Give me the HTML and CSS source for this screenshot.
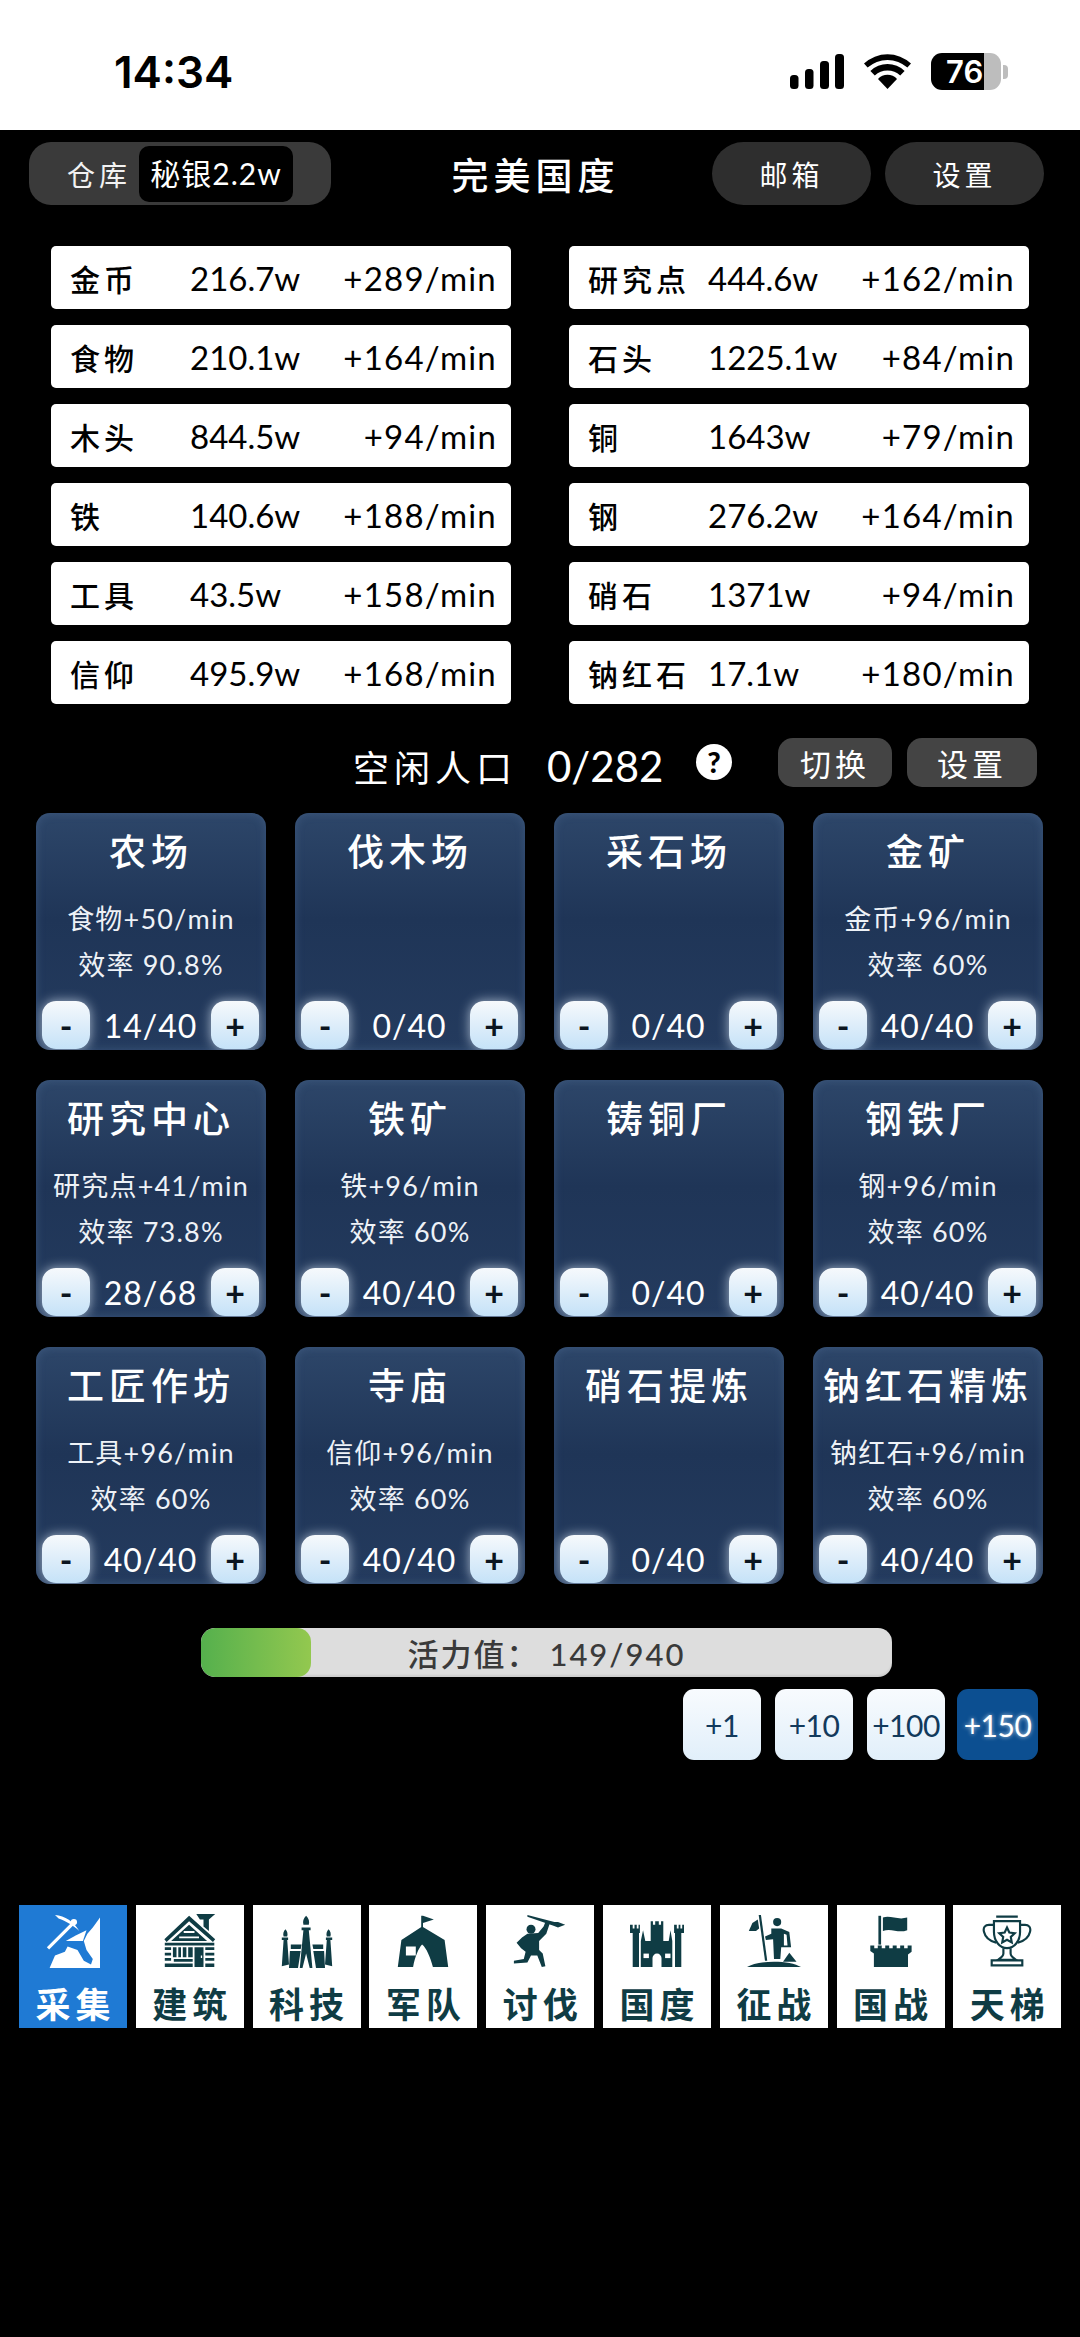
FILE: index.html
```html
<!DOCTYPE html>
<html lang="zh-CN">
<head>
    <meta charset="UTF-8">
    <meta name="viewport" content="width=device-width, initial-scale=1.0">
    <title>完美国度</title>
    <link rel="stylesheet" href="styles.css">
</head>
<body>
<header class="status-bar">
    <span class="clock">14:34</span>
    <div class="status-icons">
        <svg class="signal" viewBox="0 0 54 35" aria-hidden="true">
            <rect x="0" y="21" width="8.5" height="14" rx="3.5"/>
            <rect x="15" y="15" width="8.5" height="20" rx="3.5"/>
            <rect x="30" y="7" width="9" height="28" rx="3.5"/>
            <rect x="45" y="0" width="9" height="35" rx="3.5"/>
        </svg>
        <svg class="wifi" viewBox="0 0 47 35" aria-hidden="true">
            <path d="M23.5 35 14 25a13 13 0 0 1 19 0Z"/>
            <path d="M10.8 21.6 6.4 17a24.5 24.5 0 0 1 34.2 0l-4.4 4.6a18.5 18.5 0 0 0-25.4 0Z"/>
            <path d="M3.6 13.6 0 9.6a34.5 34.5 0 0 1 47 0l-3.6 4a29.5 29.5 0 0 0-39.8 0Z"/>
        </svg>
        <div class="battery"><span class="battery-level">76</span><i class="battery-cap"></i></div>
    </div>
</header>

<main class="game">
    <div class="top-bar">
        <div class="store"><span class="store-label">仓库</span><span class="store-value">秘银2.2w</span></div>
        <h1 class="realm">完美国度</h1>
        <div class="top-actions">
            <button class="pill">邮箱</button>
            <button class="pill">设置</button>
        </div>
    </div>

    <section class="resources">
        <div class="res"><b>金币</b><span>216.7w</span><em>+289/min</em></div>
        <div class="res"><b>研究点</b><span>444.6w</span><em>+162/min</em></div>
        <div class="res"><b>食物</b><span>210.1w</span><em>+164/min</em></div>
        <div class="res"><b>石头</b><span>1225.1w</span><em>+84/min</em></div>
        <div class="res"><b>木头</b><span>844.5w</span><em>+94/min</em></div>
        <div class="res"><b>铜</b><span>1643w</span><em>+79/min</em></div>
        <div class="res"><b>铁</b><span>140.6w</span><em>+188/min</em></div>
        <div class="res"><b>钢</b><span>276.2w</span><em>+164/min</em></div>
        <div class="res"><b>工具</b><span>43.5w</span><em>+158/min</em></div>
        <div class="res"><b>硝石</b><span>1371w</span><em>+94/min</em></div>
        <div class="res"><b>信仰</b><span>495.9w</span><em>+168/min</em></div>
        <div class="res"><b>钠红石</b><span>17.1w</span><em>+180/min</em></div>
    </section>

    <div class="population">
        <span class="pop-label">空闲人口</span>
        <span class="pop-value">0/282</span>
        <span class="help">?</span>
        <button class="small-btn switch">切换</button>
        <button class="small-btn conf">设置</button>
    </div>

    <section class="buildings">
        <div class="card">
            <h2>农场</h2>
            <div class="card-info"><p>食物+50/min</p><p>效率 90.8%</p></div>
            <div class="stepper"><button>-</button><span>14/40</span><button>+</button></div>
        </div>
        <div class="card">
            <h2>伐木场</h2>
            <div class="card-info"></div>
            <div class="stepper"><button>-</button><span>0/40</span><button>+</button></div>
        </div>
        <div class="card">
            <h2>采石场</h2>
            <div class="card-info"></div>
            <div class="stepper"><button>-</button><span>0/40</span><button>+</button></div>
        </div>
        <div class="card">
            <h2>金矿</h2>
            <div class="card-info"><p>金币+96/min</p><p>效率 60%</p></div>
            <div class="stepper"><button>-</button><span>40/40</span><button>+</button></div>
        </div>
        <div class="card">
            <h2>研究中心</h2>
            <div class="card-info"><p>研究点+41/min</p><p>效率 73.8%</p></div>
            <div class="stepper"><button>-</button><span>28/68</span><button>+</button></div>
        </div>
        <div class="card">
            <h2>铁矿</h2>
            <div class="card-info"><p>铁+96/min</p><p>效率 60%</p></div>
            <div class="stepper"><button>-</button><span>40/40</span><button>+</button></div>
        </div>
        <div class="card">
            <h2>铸铜厂</h2>
            <div class="card-info"></div>
            <div class="stepper"><button>-</button><span>0/40</span><button>+</button></div>
        </div>
        <div class="card">
            <h2>钢铁厂</h2>
            <div class="card-info"><p>钢+96/min</p><p>效率 60%</p></div>
            <div class="stepper"><button>-</button><span>40/40</span><button>+</button></div>
        </div>
        <div class="card">
            <h2>工匠作坊</h2>
            <div class="card-info"><p>工具+96/min</p><p>效率 60%</p></div>
            <div class="stepper"><button>-</button><span>40/40</span><button>+</button></div>
        </div>
        <div class="card">
            <h2>寺庙</h2>
            <div class="card-info"><p>信仰+96/min</p><p>效率 60%</p></div>
            <div class="stepper"><button>-</button><span>40/40</span><button>+</button></div>
        </div>
        <div class="card">
            <h2>硝石提炼</h2>
            <div class="card-info"></div>
            <div class="stepper"><button>-</button><span>0/40</span><button>+</button></div>
        </div>
        <div class="card">
            <h2>钠红石精炼</h2>
            <div class="card-info"><p>钠红石+96/min</p><p>效率 60%</p></div>
            <div class="stepper"><button>-</button><span>40/40</span><button>+</button></div>
        </div>
    </section>

    <div class="energy">
        <div class="energy-fill" style="width: 15.9%"></div>
        <span class="energy-text">活力值： 149/940</span>
    </div>
    <div class="boosts">
        <button class="boost">+1</button>
        <button class="boost">+10</button>
        <button class="boost">+100</button>
        <button class="boost boost-on">+150</button>
    </div>

    <nav class="tabs">
        <a class="tab tab-on">
            <svg viewBox="0 0 60 60" aria-hidden="true">
                <path d="M1 37 31 7l2.5 2.5-30 30Z"/>
                <path d="M10 1c11 1 21 7 27 18-6-6-15-11-23-14Z"/>
                <circle cx="31" cy="9" r="3.5"/>
                <path d="M33 24 45 18l-4 12H22Z"/>
                <path d="M60 4V60H4L10 46l11-4 3-6 11 4 7 12 8 4 2-6-7-10-3-10 4-8 6-7Z"/>
            </svg>
            <span>采集</span>
        </a>
        <a class="tab">
            <svg viewBox="0 0 60 60" aria-hidden="true">
                <path d="M37 0H58L51 6V19L45 14V6H41Z"/>
                <path d="M29 2 58 28l-2.5 3L29 8 4 31l-2.5-3Z"/>
                <path d="M29 12 49 30H9ZM18 25v2h22v-2ZM23 19v2h12v-2Z" fill-rule="evenodd"/>
                <path d="M2 32H57v3H2ZM2 37H9v3H2ZM2 43H9v3H2ZM2 49H9v3H2ZM2 55H33v4H2ZM47 37H57v3H47ZM47 43H57v3H47ZM47 49H57v3H47ZM47 55H57v4H47ZM12 50H33v3H12ZM28 37H33v11H28Z"/>
                <path d="M11 37H15V48H11ZM17 37H20V48H17ZM22 37H26V48H22Z"/>
                <path d="M35 37H45V59H35ZM42 46v3h1.500v-3Z" fill-rule="evenodd"/>
            </svg>
            <span>建筑</span>
        </a>
        <a class="tab">
            <svg viewBox="0 0 60 60" aria-hidden="true">
                <path d="M29 2c3 3 4 6 3 10h-6c-1-4 0-7 3-10Z"/>
                <path d="M24 15H34V18H32L36 60H33L29 44 25 60H22L26 18H24Z"/>
                <path d="M6 17c2 2 3 5 2 8H4c-1-3 0-6 2-8ZM54 17c2 2 3 5 2 8h-4c-1-3 0-6 2-8Z"/>
                <path d="M2 26H9V29H8L10 56 2 58 4 29H2ZM51 26H58V29H56L58 58 50 56 52 29H51Z"/>
                <path d="M12 34H24L23 39H12ZM36 34H48V39H37ZM11 41H23L20 60H10ZM37 41H49L50 60H40Z"/>
            </svg>
            <span>科技</span>
        </a>
        <a class="tab">
            <svg viewBox="0 0 60 60" aria-hidden="true">
                <path d="M28 2h2v13h-2Z"/>
                <path d="M30 2 42 6 30 10Z"/>
                <path d="M29 14 54 29 58 59H41C38 48 34 38 29 34 25 38 21 48 19 59H2L6 29ZM11 36V46H22V36Z" fill-rule="evenodd"/>
            </svg>
            <span>军队</span>
        </a>
        <a class="tab">
            <svg viewBox="0 0 60 60" aria-hidden="true">
                <path d="M16 1 46 9 50 9 58 12 50 15 45 13 16 3Z"/>
                <circle cx="20" cy="17" r="5"/>
                <path d="M16 22 28 21 34 14 36 9 41 10 37 22 29 30 29 40 33 44 36 58 32 59 27 46 20 46 16 54 1 55V52L12 50 14 42 9 38 4 32 10 26Z"/>
            </svg>
            <span>讨伐</span>
        </a>
        <a class="tab">
            <svg viewBox="0 0 60 60" aria-hidden="true">
                <path d="M0 12h3v4h2v-4h2.500v4h2v-4H11v9H10V59H3V21H0Z"/>
                <path d="M49 12h3v4h2v-4h2v4h2v-4h2v9h-3V59H50V21H49Z"/>
                <path d="M23 8h2.500v4H28V8h4v4h2.500V8H37V30h6L45 18l2 12V59H35V49a5 5 0 0 0-10 0V59H12V30L14.500 18 17 30h6Z"/>
                <rect class="cut" x="15" y="44" width="6" height="5"/>
                <rect class="cut" x="39" y="44" width="6" height="5"/>
            </svg>
            <span>国度</span>
        </a>
        <a class="tab">
            <svg viewBox="0 0 60 60" aria-hidden="true">
                <path d="M13 1h2.500l7 51H20Z"/>
                <path d="M12 6 6 10 2 19l8 0 3.500-3Z"/>
                <circle cx="33.500" cy="9" r="4.500"/>
                <path d="M27 16H38L47 20 49 37H38L37 50H30L29 28 21 29 20 25 27 22ZM41 22V35H45L44 23Z" fill-rule="evenodd"/>
                <path d="M47 43 55 53H40Z"/>
                <path d="M0 59C6 55 18 53 30 53s24 2 30 6Z"/>
            </svg>
            <span>征战</span>
        </a>
        <a class="tab">
            <svg viewBox="0 0 60 60" aria-hidden="true">
                <path d="M16 2h3V34H16Z"/>
                <path d="M21 4c8-3 16 3 27 0V18C38 22 30 15 21 19Z"/>
                <path d="M7 35h4.400v3h3.900v-3h4.400v3h3.900v-3h4.400v3h3.900v-3h4.400v3h3.900v-3h4.400v3h3.900v-3h4.400v7l-4 3V59H11V44L7 41Z"/>
            </svg>
            <span>国战</span>
        </a>
        <a class="tab">
            <svg class="cup" viewBox="0 0 60 60" aria-hidden="true">
                <path d="M18 3H42M15.500 8H44.500V20C44.500 30 38 38 30 38S15.500 30 15.500 20Z"/>
                <path d="M15.500 12H10C6 12 3 15 4.500 20 6 27 11 30 18 32M44.500 12H50C54 12 57 15 55.500 20 54 27 49 30 42 32"/>
                <path d="M26 38V44C26 47 23 49 20 51H40C37 49 34 47 34 44V38"/>
                <path d="M13 51.500H47V57H13Z"/>
                <path d="m30 15 2.600 5.500 6 .8-4.400 4.200 1.100 6L30 28.600l-5.300 2.900 1.100-6-4.400-4.200 6-.8Z"/>
            </svg>
            <span>天梯</span>
        </a>
    </nav>
</main>
</body>
</html>
```

FILE: styles.css
```css
* {
    box-sizing: border-box;
}

body {
    margin: 0;
    width: 1080px;
    height: 2337px;
    background: #000000;
    color: #FFFFFF;
    font-family: "Lato", "Noto Sans CJK SC", sans-serif;
    overflow: hidden;
}

button {
    font-family: inherit;
    border: none;
    padding: 0;
}

/* status bar */
.status-bar {
    height: 130px;
    background: #FFFFFF;
    color: #000000;
    display: flex;
    justify-content: space-between;
    align-items: center;
    padding: 13px 72px 0 114px;
}

.clock {
    font-family: "Inter", sans-serif;
    font-size: 44px;
    font-weight: 600;
}

.status-icons {
    display: flex;
    align-items: center;
    gap: 20px;
}

.signal {
    width: 54px;
    height: 35px;
}

.wifi {
    width: 47px;
    height: 35px;
}

.battery {
    display: flex;
    align-items: center;
    gap: 2px;
}

.battery-level {
    width: 70px;
    height: 37px;
    border-radius: 11px;
    background: linear-gradient(90deg, #000000 76%, #BDBDBD 76%);
    color: #FFFFFF;
    font-family: "Inter", sans-serif;
    font-size: 31px;
    font-weight: 600;
    line-height: 37px;
    padding-left: 15px;
}

.battery-cap {
    width: 5px;
    height: 14px;
    background: #BDBDBD;
    border-radius: 0 4px 4px 0;
}

/* top bar */
.top-bar {
    display: flex;
    align-items: center;
    height: 63px;
    margin-top: 12px;
    padding: 0 36px 0 29px;
}

.store {
    width: 302px;
    height: 63px;
    background: #3A3A3A;
    border-radius: 22px;
    display: flex;
    align-items: center;
    padding: 5px 38px 5px 38px;
    justify-content: space-between;
}

.store-label {
    font-size: 28px;
    letter-spacing: 4px;
    color: #F2F2F2;
}

.store-value {
    background: #000000;
    border-radius: 10px;
    width: 154px;
    height: 56px;
    font-size: 30px;
    line-height: 54px;
    letter-spacing: 1px;
    text-align: center;
    white-space: nowrap;
}

.realm {
    flex: 1;
    margin: 0;
    padding-left: 28px;
    font-size: 37px;
    font-weight: 500;
    letter-spacing: 5px;
    text-align: center;
}

.top-actions {
    display: flex;
    gap: 14px;
}

.pill {
    width: 159px;
    height: 63px;
    border-radius: 32px;
    background: #2E2E2E;
    color: #FFFFFF;
    font-size: 28px;
    letter-spacing: 4px;
}

/* resources */
.resources {
    display: grid;
    grid-template-columns: 460px 460px;
    column-gap: 58px;
    row-gap: 16px;
    padding-left: 51px;
    margin-top: 41px;
}

.res {
    height: 63px;
    background: #FFFFFF;
    color: #000000;
    border-radius: 5px;
    display: grid;
    grid-template-columns: 120px 1fr auto;
    align-items: center;
    padding: 0 14px 0 19px;
    font-size: 33px;
}

.res b {
    font-size: 30px;
    font-weight: 500;
    letter-spacing: 4px;
    white-space: nowrap;
}

.res em {
    font-style: normal;
    letter-spacing: 1.2px;
}

/* population */
.population {
    display: flex;
    align-items: center;
    height: 49px;
    margin-top: 34px;
    padding-left: 353px;
}

.pop-label {
    width: 194px;
    font-size: 36px;
    letter-spacing: 5px;
    padding-top: 6px;
}

.pop-value {
    width: 149px;
    font-size: 42px;
    padding-top: 6px;
}

.help {
    width: 36px;
    height: 36px;
    margin-top: -2px;
    border-radius: 50%;
    background: #FFFFFF;
    color: #000000;
    font-size: 29px;
    font-weight: 900;
    line-height: 36px;
    text-align: center;
}

.small-btn {
    height: 49px;
    background: #444444;
    border-radius: 15px;
    color: #FFFFFF;
    font-size: 31px;
    letter-spacing: 4px;
}

.switch {
    width: 114px;
    margin-left: 46px;
}

.conf {
    width: 130px;
    margin-left: 15px;
}

/* building cards */
.buildings {
    display: grid;
    grid-template-columns: repeat(4, 230px);
    column-gap: 29px;
    row-gap: 30px;
    padding-left: 36px;
    margin-top: 26px;
}

.card {
    height: 237px;
    border-radius: 14px;
    background: linear-gradient(180deg, #2D4669 0%, #1F3557 45%, #243B5E 100%);
    box-shadow: inset 0 0 10px rgba(90, 120, 160, 0.4);
    display: flex;
    flex-direction: column;
    text-align: center;
    overflow: hidden;
}

.card h2 {
    margin: 16px 0 0;
    height: 46px;
    font-size: 37px;
    font-weight: 500;
    line-height: 46px;
    letter-spacing: 5px;
    white-space: nowrap;
}

.card-info {
    flex: 1;
    padding-top: 29px;
}

.card-info p {
    margin: 0 0 17px;
    height: 29px;
    font-size: 27px;
    line-height: 29px;
    letter-spacing: 1.2px;
    color: #EEF2F7;
    white-space: nowrap;
}

.stepper {
    display: flex;
    justify-content: space-between;
    align-items: center;
    padding: 0 7px 1px 6px;
    font-size: 32px;
}

.stepper span {
    letter-spacing: 1px;
}

.stepper button {
    width: 48px;
    height: 48px;
    border-radius: 14px;
    background: linear-gradient(180deg, #F6F9FC 0%, #C5E2F8 100%);
    box-shadow: 0 0 12px rgba(225, 238, 252, 0.7);
    color: #0B1520;
    font-size: 34px;
    font-weight: 700;
}

/* energy */
.energy {
    position: relative;
    width: 691px;
    height: 49px;
    margin: 44px 0 0 201px;
    background: #DDDDDD;
    border-radius: 14px;
    overflow: hidden;
    text-align: center;
    box-shadow: inset 0 -2px 2px rgba(0, 0, 0, 0.08);
}

.energy-fill {
    position: absolute;
    left: 0;
    top: 0;
    height: 100%;
    background: linear-gradient(90deg, #55B04D, #93C84F);
    border-radius: 14px;
}

.energy-text {
    position: relative;
    color: #3A3A3A;
    font-size: 31px;
    font-weight: 500;
    line-height: 53px;
    letter-spacing: 2px;
}

.boosts {
    display: flex;
    justify-content: flex-end;
    gap: 14px;
    padding-right: 42px;
    margin-top: 12px;
}

.boost {
    width: 78px;
    height: 71px;
    border-radius: 11px;
    background: linear-gradient(180deg, #F8FBFE, #E1EFFA);
    color: #123A5C;
    font-size: 30px;
    letter-spacing: -0.5px;
    white-space: nowrap;
}

.boost-on {
    width: 81px;
    margin-left: -2px;
    background: #0C4F91;
    color: #FFFFFF;
    text-shadow: 0 0 4px rgba(255, 255, 255, 0.7);
}

/* bottom tabs */
.tabs {
    display: flex;
    gap: 8.8px;
    padding-left: 19px;
    margin-top: 145px;
}

.tab {
    width: 108px;
    height: 123px;
    background: #FFFFFF;
    color: #0F3C44;
    display: flex;
    flex-direction: column;
    align-items: center;
    padding-top: 9px;
}

.tab svg {
    flex: none;
    width: 54px;
    height: 54px;
    fill: #0F3C44;
}

.tab span {
    margin: 14px -5px 0 0;
    font-size: 35px;
    line-height: 44px;
    font-weight: 700;
    letter-spacing: 5px;
    white-space: nowrap;
}

.tab-on {
    background: #1F7AD4;
    color: #FFFFFF;
}

.tab-on svg {
    fill: #FFFFFF;
}

.tab .cut {
    fill: #FFFFFF;
}

.tab .cup {
    fill: none;
    stroke: #0F3C44;
    stroke-width: 2.4;
}
```
